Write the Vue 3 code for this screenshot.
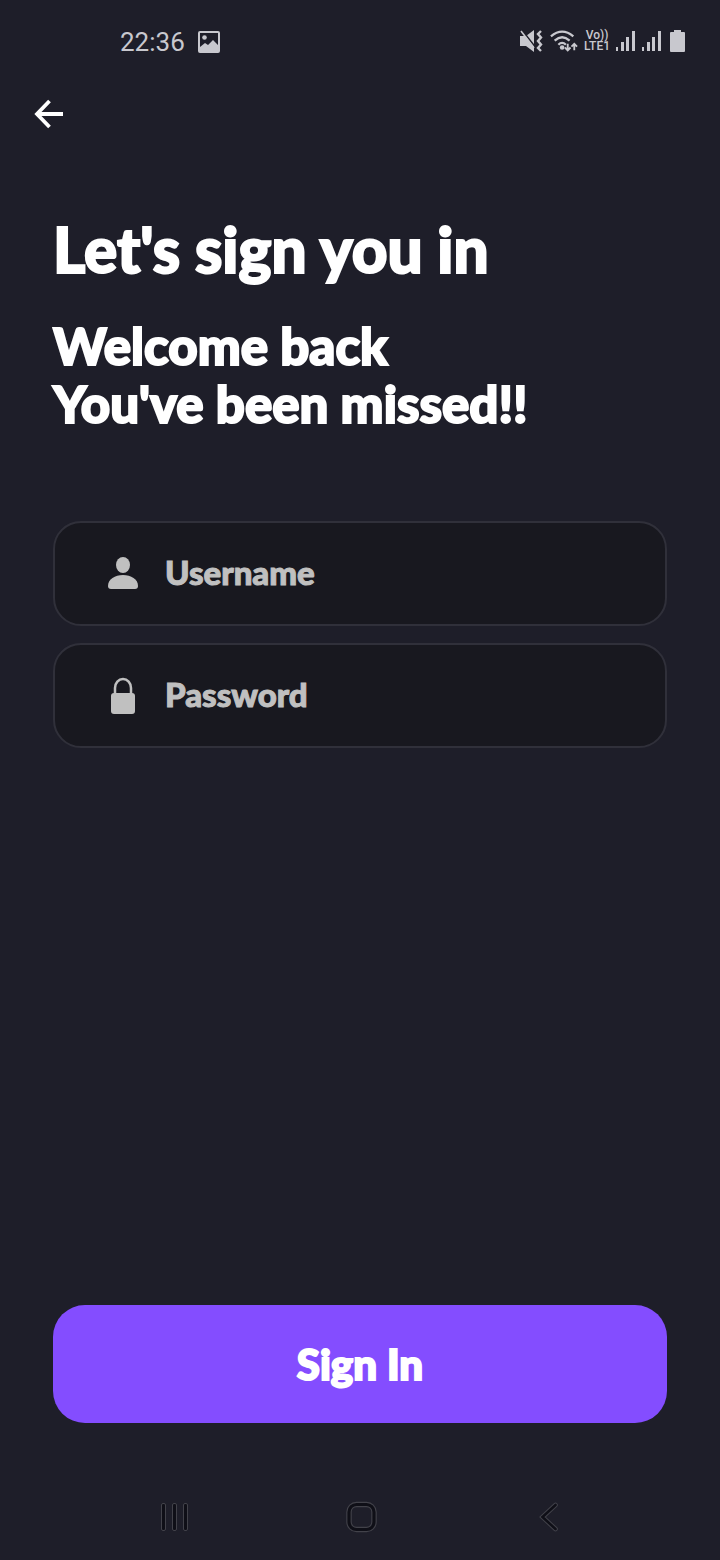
<script setup>
import { ref } from 'vue'

const username = ref('')
const password = ref('')
</script>

<template>
  <div class="screen">
    <header class="status">
      <div class="status-left">
        <time>22:36</time>
        <svg class="picture" viewBox="0 0 22 22" aria-hidden="true">
          <path fill="currentColor" fill-rule="evenodd" d="M2 0h18q2 0 2 2v18q0 2-2 2H2q-2 0-2-2V2q0-2 2-2z M2 2v14l5-4 3 2 5-5 5 5V2z" />
          <circle cx="6.500" cy="6.500" r="2.300" fill="currentColor" />
        </svg>
      </div>
      <div class="status-right">
        <svg class="mute" viewBox="0 0 24 24" aria-hidden="true">
          <path fill="currentColor" d="M0 7h6l8-6v22l-8-6H0z" />
          <path d="M2 1l14 18" stroke="#1e1e29" stroke-width="1.600" />
          <path d="M1 2l13 17" stroke="currentColor" stroke-width="1.600" />
          <path d="M21 2l-3 3 3 3.500-3 3.500 3 3.500-3 3.500 3 3" fill="none" stroke="currentColor" stroke-width="2.400" />
        </svg>
        <svg class="wifi" viewBox="0 0 30 24" aria-hidden="true">
          <g fill="none" stroke="currentColor" stroke-width="2.500">
            <path d="M1 7Q13-3 25 7M5 11.500q8-7 16 0M9 16q4-4 8 0" />
            <path d="M19 15v7m-3-3l3 3 3-3M26 22v-7m-3 3l3-3 3 3" stroke-width="2" />
          </g>
          <circle cx="13" cy="19" r="2.500" fill="currentColor" />
        </svg>
        <div class="volte"><span>Vo))</span><span>LTE1</span></div>
        <svg v-for="n in 2" :key="n" class="signal" viewBox="0 0 20 22" aria-hidden="true">
          <path fill="currentColor" d="M0 17h2v4H0zM5 12h3v9H5zM10 7h3v14h-3zM16 1h3v20h-3z" />
        </svg>
        <svg class="battery" viewBox="0 0 16 24" aria-hidden="true">
          <path fill="currentColor" d="M4 1h7v2h3q1 0 1 1v18q0 1-1 1H1q-1 0-1-1V4q0-1 1-1h3z" />
        </svg>
      </div>
    </header>

    <nav class="topbar">
      <button class="back" type="button" aria-label="Back">
        <svg viewBox="0 0 30 30" aria-hidden="true">
          <path d="M15.500 2L3 15l12.500 13M3 15h26" fill="none" stroke="currentColor" stroke-width="3.800" />
        </svg>
      </button>
    </nav>

    <main>
      <form @submit.prevent>
        <h1>Let's sign you in</h1>
        <p class="welcome">Welcome back<br />You've been missed!!</p>

        <div class="fields">
          <div class="field">
            <label for="username" aria-label="Username">
              <svg viewBox="0 0 36 40" aria-hidden="true">
                <ellipse cx="18" cy="11" rx="7" ry="8" fill="currentColor" />
                <path fill="currentColor" d="M3 32c0-7 7-11 15-11s15 4 15 11q0 3-3 3H6q-3 0-3-3z" />
              </svg>
            </label>
            <input id="username" v-model="username" type="text" placeholder="Username" autocomplete="username" />
          </div>
          <div class="field">
            <label for="password" aria-label="Password">
              <svg viewBox="0 0 36 40" aria-hidden="true">
                <path d="M10 19v-7a8 9 0 0 1 16 0v7" fill="none" stroke="currentColor" stroke-width="2.500" />
                <rect x="6" y="17" width="24" height="21" rx="3" fill="currentColor" />
              </svg>
            </label>
            <input id="password" v-model="password" type="password" placeholder="Password" autocomplete="current-password" />
          </div>
        </div>

        <button class="submit" type="submit">Sign In</button>
      </form>
    </main>

    <footer class="system-nav">
      <button type="button" aria-label="Recent apps">
        <svg viewBox="0 0 32 32" aria-hidden="true">
          <g fill="#0f0f17" stroke="#42424a">
            <rect x="3.500" y="2.500" width="4" height="27" rx="1.500" />
            <rect x="14.500" y="2.500" width="4" height="27" rx="1.500" />
            <rect x="25.500" y="2.500" width="4" height="27" rx="1.500" />
          </g>
        </svg>
      </button>
      <button type="button" aria-label="Home">
        <svg viewBox="0 0 32 32" aria-hidden="true">
          <rect x="4" y="3.500" width="25" height="25" rx="7.500" fill="none" stroke="#42424a" stroke-width="5.400" />
          <rect x="4" y="3.500" width="25" height="25" rx="7.500" fill="none" stroke="#0f0f17" stroke-width="3.200" />
        </svg>
      </button>
      <button type="button" aria-label="Back">
        <svg viewBox="0 0 32 32" aria-hidden="true">
          <g fill="none" stroke-linecap="round">
            <path d="M23.500 4L10.500 16l13 12" stroke="#42424a" stroke-width="4.600" />
            <path d="M23.500 4L10.500 16l13 12" stroke="#0f0f17" stroke-width="2.600" />
          </g>
        </svg>
      </button>
    </footer>
  </div>
</template>

<style>
body {
  margin: 0;
  background: #1e1e29;
}
</style>

<style scoped>
.screen {
  min-height: 100vh;
  display: flex;
  flex-direction: column;
  box-sizing: border-box;
  background: #1e1e29;
  color: #fff;
  font-family: Lato, "Liberation Sans", sans-serif;
}

button {
  border: 0;
  padding: 0;
  background: none;
  color: inherit;
  font-family: inherit;
  cursor: pointer;
}

svg {
  display: block;
}

.status {
  height: 84px;
  padding: 0 34px 0 120px;
  display: flex;
  justify-content: space-between;
  align-items: center;
  color: #c8c8ce;
  font-family: Roboto, sans-serif;
}

.status-left,
.status-right {
  display: flex;
  align-items: center;
}

.status-left {
  gap: 13px;
  font-size: 26px;
}

.status-right {
  gap: 6px;
  padding-bottom: 2px;
}

.picture {
  width: 22px;
  height: 22px;
}

.mute {
  width: 24px;
  height: 24px;
}

.wifi {
  width: 28px;
  height: 24px;
}

.volte {
  display: flex;
  flex-direction: column;
  align-items: center;
  font-size: 12px;
  font-weight: 500;
  line-height: 11px;
}

.signal {
  width: 20px;
  height: 22px;
}

.battery {
  width: 16px;
  height: 24px;
  margin-left: 2px;
}

.topbar {
  padding: 15px 34px;
}

.back svg {
  width: 30px;
  height: 30px;
}

main {
  flex: 1;
  display: flex;
  padding: 66px 53px 50px;
}

form {
  flex: 1;
  display: flex;
  flex-direction: column;
}

h1,
.welcome,
.submit {
  font-weight: 900;
  -webkit-text-stroke: 2px currentColor;
  paint-order: stroke fill;
  stroke-linejoin: round;
}

h1 {
  margin: 0;
  font-size: 62px;
  line-height: 72px;
}

.welcome {
  margin: 32px 0 0;
  font-size: 51px;
  line-height: 58px;
}

.fields {
  margin-top: 88px;
  display: flex;
  flex-direction: column;
  gap: 17px;
}

.field {
  height: 105px;
  box-sizing: border-box;
  display: flex;
  align-items: center;
  gap: 24px;
  padding: 0 50px;
  border: 2px solid #30303a;
  border-radius: 28px;
  background: #18181f;
  color: #c0c0c0;
}

.field svg {
  width: 36px;
  height: 40px;
}

.field input {
  flex: 1;
  min-width: 0;
  height: 56px;
  padding: 0 0 4px;
  border: 0;
  outline: 0;
  background: none;
  color: inherit;
  font-family: inherit;
  font-size: 33px;
  font-weight: 900;
}

.field input::placeholder {
  color: #c0c0c0;
  opacity: 1;
  -webkit-text-stroke: 1px #c0c0c0;
}

.submit {
  margin-top: auto;
  height: 118px;
  border-radius: 32px;
  background: #844dff;
  font-size: 42px;
}

.system-nav {
  height: 87px;
  padding: 0 78px 0 80px;
  display: grid;
  grid-template-columns: repeat(3, 1fr);
  align-items: center;
  justify-items: center;
}

.system-nav svg {
  width: 32px;
  height: 32px;
}
</style>
